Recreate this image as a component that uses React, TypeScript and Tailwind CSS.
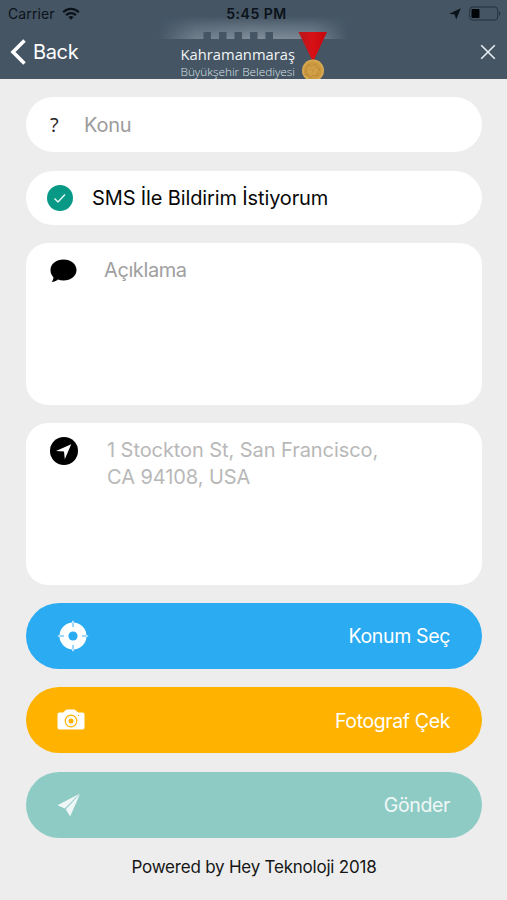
import React from "react"

function StatusBar() {
  return (
    <div className="grid h-[27px] grid-cols-3 items-center pl-[8px] pr-[6px] text-[14px] leading-none text-[#0b1219]">
      <div className="flex items-center gap-[7px]">
        <span className="tracking-[0.1px]">Carrier</span>
        <svg width="18" height="13" viewBox="0 0 18 13" fill="none" stroke="currentColor" strokeWidth="2.2">
          <path d="M1.2 5.2C5.7 .8 12.300 .8 16.800 5.200" />
          <path d="M4.100 8.100C6.900 5.400 11.100 5.400 13.900 8.100" />
          <path d="M6.400 10.100C8 8.700 10 8.700 11.600 10.100L9 12.700Z" fill="currentColor" stroke="none" />
        </svg>
      </div>
      <span className="relative z-10 pl-[4px] text-center font-semibold tracking-[0.5px]">5:45 PM</span>
      <div className="flex items-center justify-end gap-[8px]">
        <svg width="12" height="12" viewBox="0 0 12 12" fill="currentColor">
          <path d="M11.800 .2 7.200 11.600 5.700 6.600 .3 5.800Z" />
        </svg>
        <svg width="32" height="15" viewBox="0 0 32 15">
          <rect x=".7" y="1" width="28" height="13" rx="3" fill="none" stroke="#23313d" strokeWidth="1" />
          <rect x="2.500" y="3" width="8" height="9" rx="1" fill="#020508" />
          <path d="M30 5.200C31.700 6 31.700 9 30 9.800Z" fill="#23313d" />
        </svg>
      </div>
    </div>
  )
}

function Logo() {
  return (
    <svg className="absolute left-[150px] top-0" width="200" height="79" viewBox="0 0 200 79">
      <defs>
        <linearGradient id="fade" x1="0" y1="0" x2="0" y2="1">
          <stop offset="0" stopColor="white" stopOpacity="0" />
          <stop offset=".5" stopColor="white" stopOpacity=".55" />
          <stop offset="1" stopColor="white" />
        </linearGradient>
        <mask id="glowMask">
          <rect x="0" y="16" width="200" height="23" fill="url(#fade)" />
        </mask>
        <linearGradient id="glow" x1="0" y1="0" x2="1" y2="0">
          <stop offset="0" stopColor="#98a4af" stopOpacity="0" />
          <stop offset=".2" stopColor="#98a4af" stopOpacity=".55" />
          <stop offset=".5" stopColor="#98a4af" stopOpacity=".72" />
          <stop offset=".82" stopColor="#98a4af" stopOpacity=".62" />
          <stop offset="1" stopColor="#98a4af" stopOpacity="0" />
        </linearGradient>
        <linearGradient id="ribbon" x1="0" y1="0" x2="1" y2="0">
          <stop offset="0" stopColor="#b5161b" />
          <stop offset=".5" stopColor="#d81016" />
          <stop offset="1" stopColor="#c5080d" />
        </linearGradient>
        <radialGradient id="medal">
          <stop offset="0" stopColor="#d9a84c" />
          <stop offset=".7" stopColor="#c9973e" />
          <stop offset="1" stopColor="#dcae55" />
        </radialGradient>
      </defs>
      <rect x="8" y="16" width="190" height="23" fill="url(#glow)" mask="url(#glowMask)" />
      <path
        d="M53.500 32h7.500v7h-7.500zM69 32h7.500v7H69zM84.500 32H92v7h-7.500zM100 32h7.500v7H100zM115.500 32h7.500v7h-7.500z"
        fill="#465564"
      />
      <text x="30.500" y="59.500" fontFamily="Open Sans, sans-serif" fontSize="15" textLength="114.500" lengthAdjust="spacingAndGlyphs" fill="#f1f4f6">Kahramanmaraş</text>
      <text x="30.500" y="75.500" fontFamily="Open Sans, sans-serif" fontSize="11.500" fontWeight="300" textLength="114.500" lengthAdjust="spacingAndGlyphs" fill="#dce2e7">Büyükşehir Belediyesi</text>
      <path d="M148.500 32h28.500l-13 28h-2z" fill="url(#ribbon)" />
      <circle cx="163" cy="70.500" r="11" fill="url(#medal)" />
      <path d="M156 67l3-3 2 3 4-3 2 4 3 1-3 4 1 3-5-1-3 3-2-4-3 1zM160 69l4 2M165 67l-3 6" fill="none" stroke="#aa7b2c" strokeWidth=".9" opacity=".5" />
    </svg>
  )
}

function Header() {
  return (
    <header className="relative h-[79px] bg-[#455564]">
      <Logo />
      <StatusBar />
      <div className="flex h-[50px] items-center justify-between pl-[10px] pr-[11px] text-white">
        <button className="flex items-center gap-[6px]">
          <svg width="17" height="26" viewBox="0 0 17 26" fill="none" stroke="currentColor" strokeWidth="3.600">
            <path d="M14.500 1.500 3 13l11.500 11.500" />
          </svg>
          <span className="text-[20px] leading-none tracking-[-0.35px]">Back</span>
        </button>
        <svg width="16" height="16" viewBox="0 0 16 16" fill="none" stroke="#e8edf1" strokeWidth="1.600">
          <path d="M1.200 1.200l13.600 13.600M14.800 1.200 1.200 14.800" />
        </svg>
      </div>
    </header>
  )
}

function ActionButton({ label, className, icon }: { label: string; className: string; icon: React.ReactNode }) {
  return (
    <button className={`flex h-[66px] w-full items-center justify-between rounded-full pl-[31px] pr-[32px] text-[19.5px] ${className}`}>
      {icon}
      <span className="pt-[2px] leading-none">{label}</span>
    </button>
  )
}

export default function App() {
  return (
    <div className="h-[900px] w-[507px] overflow-hidden bg-[#ededed] font-[Inter,sans-serif]">
      <Header />
      <main className="flex flex-col pr-[25px] pl-[26px] pt-[18px]">
        <div className="flex h-[55px] items-center rounded-full bg-white pl-[24px]">
          <span className="w-[34px] font-['Open_Sans',sans-serif] text-[20px] text-[#222]">?</span>
          <span className="text-[20px] tracking-[-0.2px] text-[#9b9b9b]">Konu</span>
        </div>

        <div className="mt-[19px] flex h-[54px] items-center gap-[19px] rounded-full bg-white pl-[21px]">
          <svg width="26" height="26" viewBox="0 0 26 26">
            <circle cx="13" cy="13" r="13" fill="#079985" />
            <path d="M7.500 13.500l3.500 3.500 7-7.500" fill="none" stroke="#e6f7f4" strokeWidth="1.500" />
          </svg>
          <span className="text-[20px] tracking-[-0.13px] text-[#080808]">SMS İle Bildirim İstiyorum</span>
        </div>

        <div className="mt-[18px] flex h-[162px] items-start rounded-[22px] bg-white pl-[24px] pt-[14px]">
          <svg className="mt-[2px] mr-[27px]" width="27" height="24" viewBox="0 0 27 24">
            <path d="M13.500 .5C20.800 .5 26.500 5 26.500 11S20.800 21.500 13.500 21.500c-2 0-3.900-.3-5.600-.9C6.500 21.900 4 23 1.600 23c1-1.100 1.700-3 1.900-4.600C1.600 16.500 .5 14 .5 11 .5 5 6.200 .5 13.500 .5Z" />
          </svg>
          <span className="text-[20px] leading-[27px] tracking-[-0.4px] text-[#a0a0a0]">Açıklama</span>
        </div>

        <div className="mt-[18px] flex h-[162px] items-start rounded-[22px] bg-white pl-[24px] pt-[14px]">
          <svg className="mr-[29px]" width="28" height="28" viewBox="0 0 28 28">
            <circle cx="14" cy="14" r="14" />
            <path d="M21.200 7.200 14.800 22.200l-.8-7.700L6 14Z" fill="white" />
          </svg>
          <p className="text-[20px] leading-[27px] tracking-[-0.07px] text-[#b8b8b8]">
            1 Stockton St, San Francisco,
            <br />
            CA 94108, USA
          </p>
        </div>

        <div className="mt-[18px] flex flex-col gap-[18.300px]">
          <ActionButton
            label="Konum Seç"
            className="bg-[#2aabf2] tracking-[-0.35px] text-white"
            icon={
              <svg width="32" height="32" viewBox="0 0 32 32">
                <circle cx="16" cy="16" r="13.500" fill="white" />
                <circle cx="16" cy="16" r="4.600" fill="#2aabf2" />
                <path d="M16 2V7M16 25v5M2 16h5M25 16h5" stroke="#7dccf7" strokeWidth="1.500" />
                <path d="M16 .8v2.200M16 29v2.200M.8 16H3M29 16h2.200" stroke="white" strokeWidth="1.200" />
              </svg>
            }
          />
          <ActionButton
            label="Fotograf Çek"
            className="bg-[#ffb300] tracking-[-0.38px] text-white"
            icon={
              <svg width="28" height="22" viewBox="0 0 28 22">
                <path d="M2.500 3.500h3.700l2-2C9 .7 10 .5 11 .5h5c1.500 0 2.400.3 3.200 1.200l1.800 1.800h4.500A2 2 0 0 1 27.500 5.500v13a2 2 0 0 1-2 2h-23a2 2 0 0 1-2-2v-13a2 2 0 0 1 2-2Z" fill="white" />
                <circle cx="14" cy="12" r="5.800" fill="none" stroke="#ffb300" strokeWidth="1.200" />
                <circle cx="14" cy="12" r="2.500" fill="#ffb300" />
                <circle cx="21.500" cy="6.500" r=".7" fill="#ffb300" />
              </svg>
            }
          />
          <ActionButton
            label="Gönder"
            className="bg-[#8fcbc5] tracking-[-0.35px] text-[#eff8f7]"
            icon={
              <svg width="24" height="24" viewBox="0 0 24 24" fill="#eff8f7">
                <path d="M22.500 .8.500 12.200l7.300 3.300Z" />
                <path d="M23 1 8.800 16.200l4.400 7.200Z" />
              </svg>
            }
          />
        </div>
        <footer className="mt-[17px] text-center text-[17px] leading-6 tracking-[-0.22px] text-[#161616]">Powered by Hey Teknoloji 2018</footer>
      </main>
    </div>
  )
}
